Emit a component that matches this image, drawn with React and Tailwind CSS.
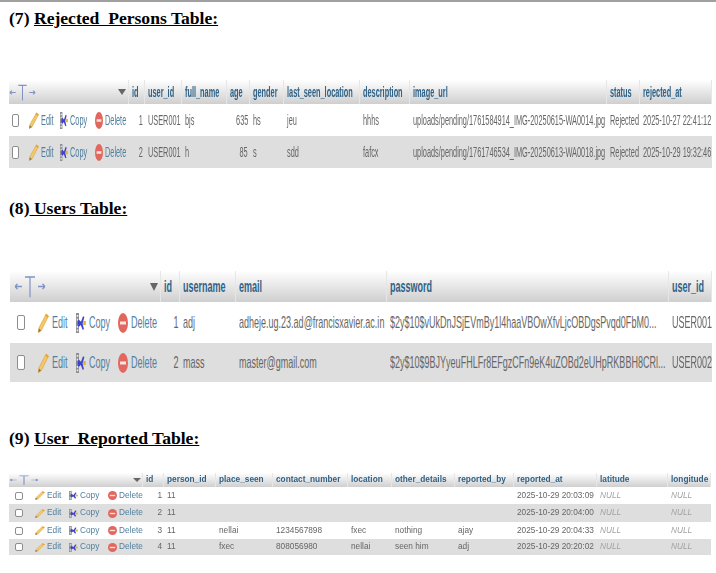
import React from 'react';

const FONT = "font-['Liberation_Sans',Arial,sans-serif]";

function Pencil({ className }) {
  return (
    <svg viewBox="0 0 10 16" preserveAspectRatio="none" className={className}>
      <path d="M7.4 0.8 L9.6 2.4 L3 14 L0.4 15.6 L0.8 12 Z" fill="#f4c968" stroke="#d29a3a" strokeWidth="0.5" />
      <path d="M7.4 0.8 L9.6 2.4 L8.8 3.8 L6.6 2.2 Z" fill="#e9a23b" />
      <path d="M0.8 12.4 L2.8 14 L0.4 15.6 Z" fill="#8a7440" />
    </svg>
  );
}

function CopyIcon({ className }) {
  return (
    <svg viewBox="0 0 10 16" preserveAspectRatio="none" className={className}>
      <rect x="0" y="0" width="3" height="16" fill="#8d8d92" />
      <rect x="0.7" y="1.6" width="1.6" height="1.4" fill="#ececec" />
      <rect x="0.7" y="4.6" width="1.6" height="1.4" fill="#ececec" />
      <rect x="0.7" y="10.4" width="1.6" height="1.4" fill="#ececec" />
      <rect x="0.7" y="13.2" width="1.6" height="1.4" fill="#ececec" />
      <path d="M2.4 5 L5 7 L7 2.6 L8.4 3.2 L6.6 8.4 L8 13 L6.6 13.4 L4.8 9.6 L2.4 11.4 L1.6 8.2 Z" fill="#3f45c8" />
      <rect x="7.2" y="6.4" width="2.6" height="3.2" fill="#d9b53a" />
    </svg>
  );
}

function DeleteIcon({ className }) {
  return (
    <svg viewBox="0 0 10 16" preserveAspectRatio="none" className={className}>
      <ellipse cx="5" cy="8" rx="5" ry="8" fill="#e2675e" />
      <rect x="2" y="6.8" width="6" height="2.4" fill="#f7e3e0" />
    </svg>
  );
}

function ResizeMark({ className }) {
  return (
    <svg viewBox="0 0 32 18" preserveAspectRatio="none" className={className} fill="none" stroke="#7f93c4" strokeWidth="1.2">
      <path d="M1 9 H8 M1 9 L3.5 7 M1 9 L3.5 11" />
      <path d="M11 1.5 H21 M16 1.5 V17.5" />
      <path d="M24 9 H31 M31 9 L28.5 7 M31 9 L28.5 11" />
    </svg>
  );
}

function Txt({ t, className }) {
  return <span className={`inline-block shrink-0 whitespace-nowrap ${className}`}>{t}</span>;
}

function Table({ cfg, cols, rows }) {
  return (
    <div className={`${cfg.wrap} ${FONT} blur-[0.45px]`}>
      <div className={`grid ${cfg.grid} ${cfg.headH} bg-gradient-to-b from-white to-[#cfcfcf]`}>
        <div className="flex items-center justify-between border-r border-[#e6e6e6]">
          <ResizeMark className={cfg.resize} />
          <span className={cfg.sort} />
        </div>
        {cols.map((c) => (
          <div key={c.name} className={`flex items-center border-r border-[#e6e6e6] ${cfg.headPad}`}>
            <Txt t={c.name} className={`origin-left font-bold text-[#2f6288] ${cfg.text} ${cfg.squeeze}`} />
          </div>
        ))}
      </div>
      {rows.map((row, i) => (
        <div key={i} className={`grid ${cfg.grid} ${cfg.rowH[i]} ${i % 2 ? 'bg-[#dedede]' : 'bg-white'}`}>
          <div className={`flex items-center ${cfg.actPad}`}>
            <div className={cfg.boxSlot}>
              <div className={`border border-[#8d8d8d] rounded-[2px] bg-white ${cfg.box}`} />
            </div>
            <div className={`flex items-center ${cfg.editSlot}`}>
              <Pencil className={cfg.pencil} />
              <Txt t="Edit" className={`origin-left text-[#52809f] ${cfg.text} ${cfg.squeeze} ${cfg.iconGap}`} />
            </div>
            <div className={`flex items-center ${cfg.copySlot}`}>
              <CopyIcon className={cfg.icon} />
              <Txt t="Copy" className={`origin-left text-[#52809f] ${cfg.text} ${cfg.squeeze} ${cfg.iconGap}`} />
            </div>
            <div className="flex items-center">
              <DeleteIcon className={cfg.icon} />
              <Txt t="Delete" className={`origin-left text-[#52809f] ${cfg.text} ${cfg.squeeze} ${cfg.iconGap}`} />
            </div>
          </div>
          {row.map((v, j) => {
            const right = cols[j].right;
            const isNull = v === 'NULL';
            return (
              <div key={j} className={`flex items-center ${right ? `justify-end ${cfg.cellPadR}` : cfg.cellPad}`}>
                <Txt
                  t={v}
                  className={`${right ? 'origin-right' : 'origin-left'} ${cfg.squeeze} ${cfg.text} ${isNull ? 'italic text-[#a3a3a3]' : 'text-[#666666]'}`}
                />
              </div>
            );
          })}
        </div>
      ))}
    </div>
  );
}

const rejected = {
  wrap: 'ml-[9px] w-[703px] mt-[51px]',
  grid: 'grid-cols-[120px_16px_37px_45px_23px_34px_76px_50px_197px_33px_72px]',
  headH: 'h-[24px]',
  rowH: ['h-[32px]', 'h-[32px]'],
  text: 'text-[14px]',
  squeeze: 'scale-x-[0.525]',
  resize: 'w-[27px] h-[17px]',
  sort: 'mr-[2px] border-x-[4px] border-t-[6px] border-x-transparent border-t-[#666666]',
  headPad: 'pl-[3px]',
  actPad: 'pl-[3px]',
  cellPad: 'pl-[3px]',
  cellPadR: 'pr-[2px]',
  boxSlot: 'w-[17px] shrink-0',
  box: 'w-[7px] h-[13px]',
  editSlot: 'w-[31px] shrink-0',
  copySlot: 'w-[35px] shrink-0',
  pencil: 'w-[10px] h-[17px] shrink-0',
  icon: 'w-[8px] h-[17px] shrink-0',
  iconGap: 'ml-[2px]',
};

const users = {
  wrap: 'ml-[10px] w-[702px] mt-[52px]',
  grid: 'grid-cols-[151px_19px_56px_151px_282px_43px]',
  headH: 'h-[31px]',
  rowH: ['h-[41px]', 'h-[39px]'],
  text: 'text-[17px]',
  squeeze: 'scale-x-[0.53]',
  resize: 'w-[32px] h-[23px] ml-[4px]',
  sort: 'mr-[2px] border-x-[4px] border-t-[8px] border-x-transparent border-t-[#666666]',
  headPad: 'pl-[3px]',
  actPad: 'pl-[7px]',
  cellPad: 'pl-[3px]',
  cellPadR: 'pr-[2px]',
  boxSlot: 'w-[21px] shrink-0',
  box: 'w-[8px] h-[15px]',
  editSlot: 'w-[38px] shrink-0',
  copySlot: 'w-[42px] shrink-0',
  pencil: 'w-[11px] h-[20px] shrink-0',
  icon: 'w-[10px] h-[20px] shrink-0',
  iconGap: 'ml-[3px]',
};

const reported = {
  wrap: 'ml-[9px] w-[702px] mt-[24px]',
  grid: 'grid-cols-[134px_21px_52px_57px_75px_44px_63px_59px_83px_71px_43px]',
  headH: 'h-[14px]',
  rowH: ['h-[17px]', 'h-[18px]', 'h-[17px]', 'h-[16px]'],
  text: 'text-[9px]',
  squeeze: 'scale-x-[0.92]',
  resize: 'w-[30px] h-[10px]',
  sort: 'mr-[1px] border-x-[4px] border-t-[4px] border-x-transparent border-t-[#666666]',
  headPad: 'pl-[3px]',
  actPad: 'pl-[6px]',
  cellPad: 'pl-[3px]',
  cellPadR: 'pr-[2px]',
  boxSlot: 'w-[20px] shrink-0',
  box: 'w-[8px] h-[8px]',
  editSlot: 'w-[34px] shrink-0',
  copySlot: 'w-[39px] shrink-0',
  pencil: 'w-[10px] h-[9px] shrink-0',
  icon: 'w-[9px] h-[9px] shrink-0',
  iconGap: 'ml-[2px]',
};

const rejectedCols = [
  { name: 'id', right: true }, { name: 'user_id' }, { name: 'full_name' }, { name: 'age', right: true },
  { name: 'gender' }, { name: 'last_seen_location' }, { name: 'description' }, { name: 'image_url' },
  { name: 'status' }, { name: 'rejected_at' },
];
const rejectedRows = [
  ['1', 'USER001', 'bjs', '635', 'hs', 'jeu', 'hhhs', 'uploads/pending/1761584914_IMG-20250615-WA0014.jpg', 'Rejected', '2025-10-27 22:41:12'],
  ['2', 'USER001', 'h', '85', 's', 'sdd', 'fafcx', 'uploads/pending/1761746534_IMG-20250613-WA0018.jpg', 'Rejected', '2025-10-29 19:32:46'],
];

const userCols = [
  { name: 'id', right: true }, { name: 'username' }, { name: 'email' }, { name: 'password' }, { name: 'user_id' },
];
const userRows = [
  ['1', 'adj', 'adheje.ug.23.ad@francisxavier.ac.in', '$2y$10$vUkDnJSjEVmBy1l4haaVBOwXfvLjcOBDgsPvqd0FbM0...', 'USER001'],
  ['2', 'mass', 'master@gmail.com', '$2y$10$9BJYyeuFHLFr8EFgzCFn9eK4uZOBd2eUHpRKBBH8CRl...', 'USER002'],
];

const reportedCols = [
  { name: 'id', right: true }, { name: 'person_id' }, { name: 'place_seen' }, { name: 'contact_number' },
  { name: 'location' }, { name: 'other_details' }, { name: 'reported_by' }, { name: 'reported_at' },
  { name: 'latitude' }, { name: 'longitude' },
];
const reportedRows = [
  ['1', '11', '', '', '', '', '', '2025-10-29 20:03:09', 'NULL', 'NULL'],
  ['2', '11', '', '', '', '', '', '2025-10-29 20:04:00', 'NULL', 'NULL'],
  ['3', '11', 'nellai', '1234567898', 'fxec', 'nothing', 'ajay', '2025-10-29 20:04:33', 'NULL', 'NULL'],
  ['4', '11', 'fxec', '808056980', 'nellai', 'seen him', 'adj', '2025-10-29 20:20:02', 'NULL', 'NULL'],
];

function Heading({ className, num, title }) {
  return (
    <h2 className={`ml-[9px] h-[22px] leading-[22px] font-bold text-[17.6px] text-black whitespace-pre font-['Liberation_Serif','Times_New_Roman',serif] ${className}`}>
      {num}
      <span className="underline">{title}</span>
    </h2>
  );
}

export default function App() {
  return (
    <div className="w-[716px] h-[573px] overflow-hidden bg-white border-t-2 border-[#a0a0a0]">
      <Heading className="mt-[5px]" num="(7) " title="Rejected  Persons Table:" />
      <Table cfg={rejected} cols={rejectedCols} rows={rejectedRows} />
      <Heading className="mt-[29px]" num="(8)" title=" Users Table:" />
      <Table cfg={users} cols={userCols} rows={userRows} />
      <Heading className="mt-[45px]" num="(9) " title="User  Reported Table:" />
      <Table cfg={reported} cols={reportedCols} rows={reportedRows} />
    </div>
  );
}
